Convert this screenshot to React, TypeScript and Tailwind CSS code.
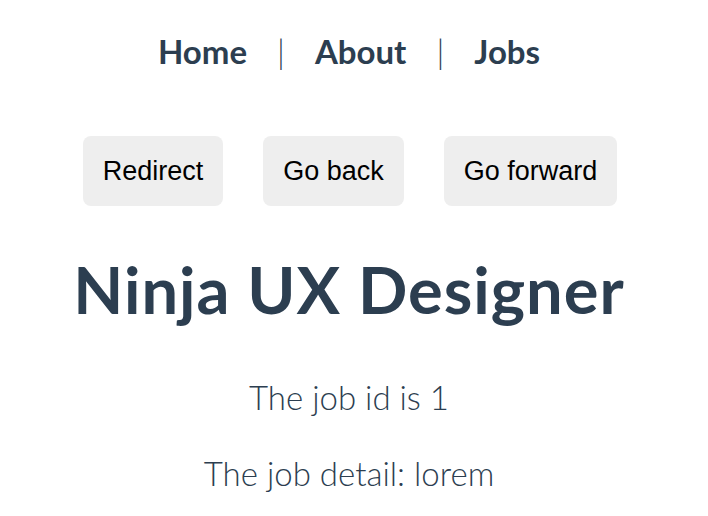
export default function App() {
  return (
    <div className="min-h-[516px] w-full bg-white pr-[10px] text-center text-[#2c3e50]" style={{ fontFamily: 'Lato, "Noto Sans", sans-serif' }}>
      <nav className="flex items-center justify-center pt-[31px] text-[33px] leading-[40px]">
        <a className="font-bold">Home</a>
        <span className="mx-[30px] font-light">|</span>
        <a className="font-bold">About</a>
        <span className="mx-[30px] font-light">|</span>
        <a className="font-bold">Jobs</a>
      </nav>
      <div className="mt-[65px] flex justify-center gap-[40px] pl-[2px]" style={{ fontFamily: '"Liberation Sans", Arial, sans-serif' }}>
        <button className="h-[70px] rounded-[8px] bg-[#eeeeee] px-[20px] text-[27px] text-black">Redirect</button>
        <button className="h-[70px] rounded-[8px] bg-[#eeeeee] px-[20px] text-[27px] text-black">Go back</button>
        <button className="h-[70px] rounded-[8px] bg-[#eeeeee] px-[20px] text-[27px] text-black">Go forward</button>
      </div>
      <h2 className="mt-[43px] text-[65px] font-bold leading-[80px] tracking-[1px]">Ninja UX Designer</h2>
      <p className="mt-[48px] text-[33px] font-light leading-[40px]">The job id is 1</p>
      <p className="mt-[36px] text-[33px] font-light leading-[40px]">The job detail: lorem</p>
    </div>
  );
}
